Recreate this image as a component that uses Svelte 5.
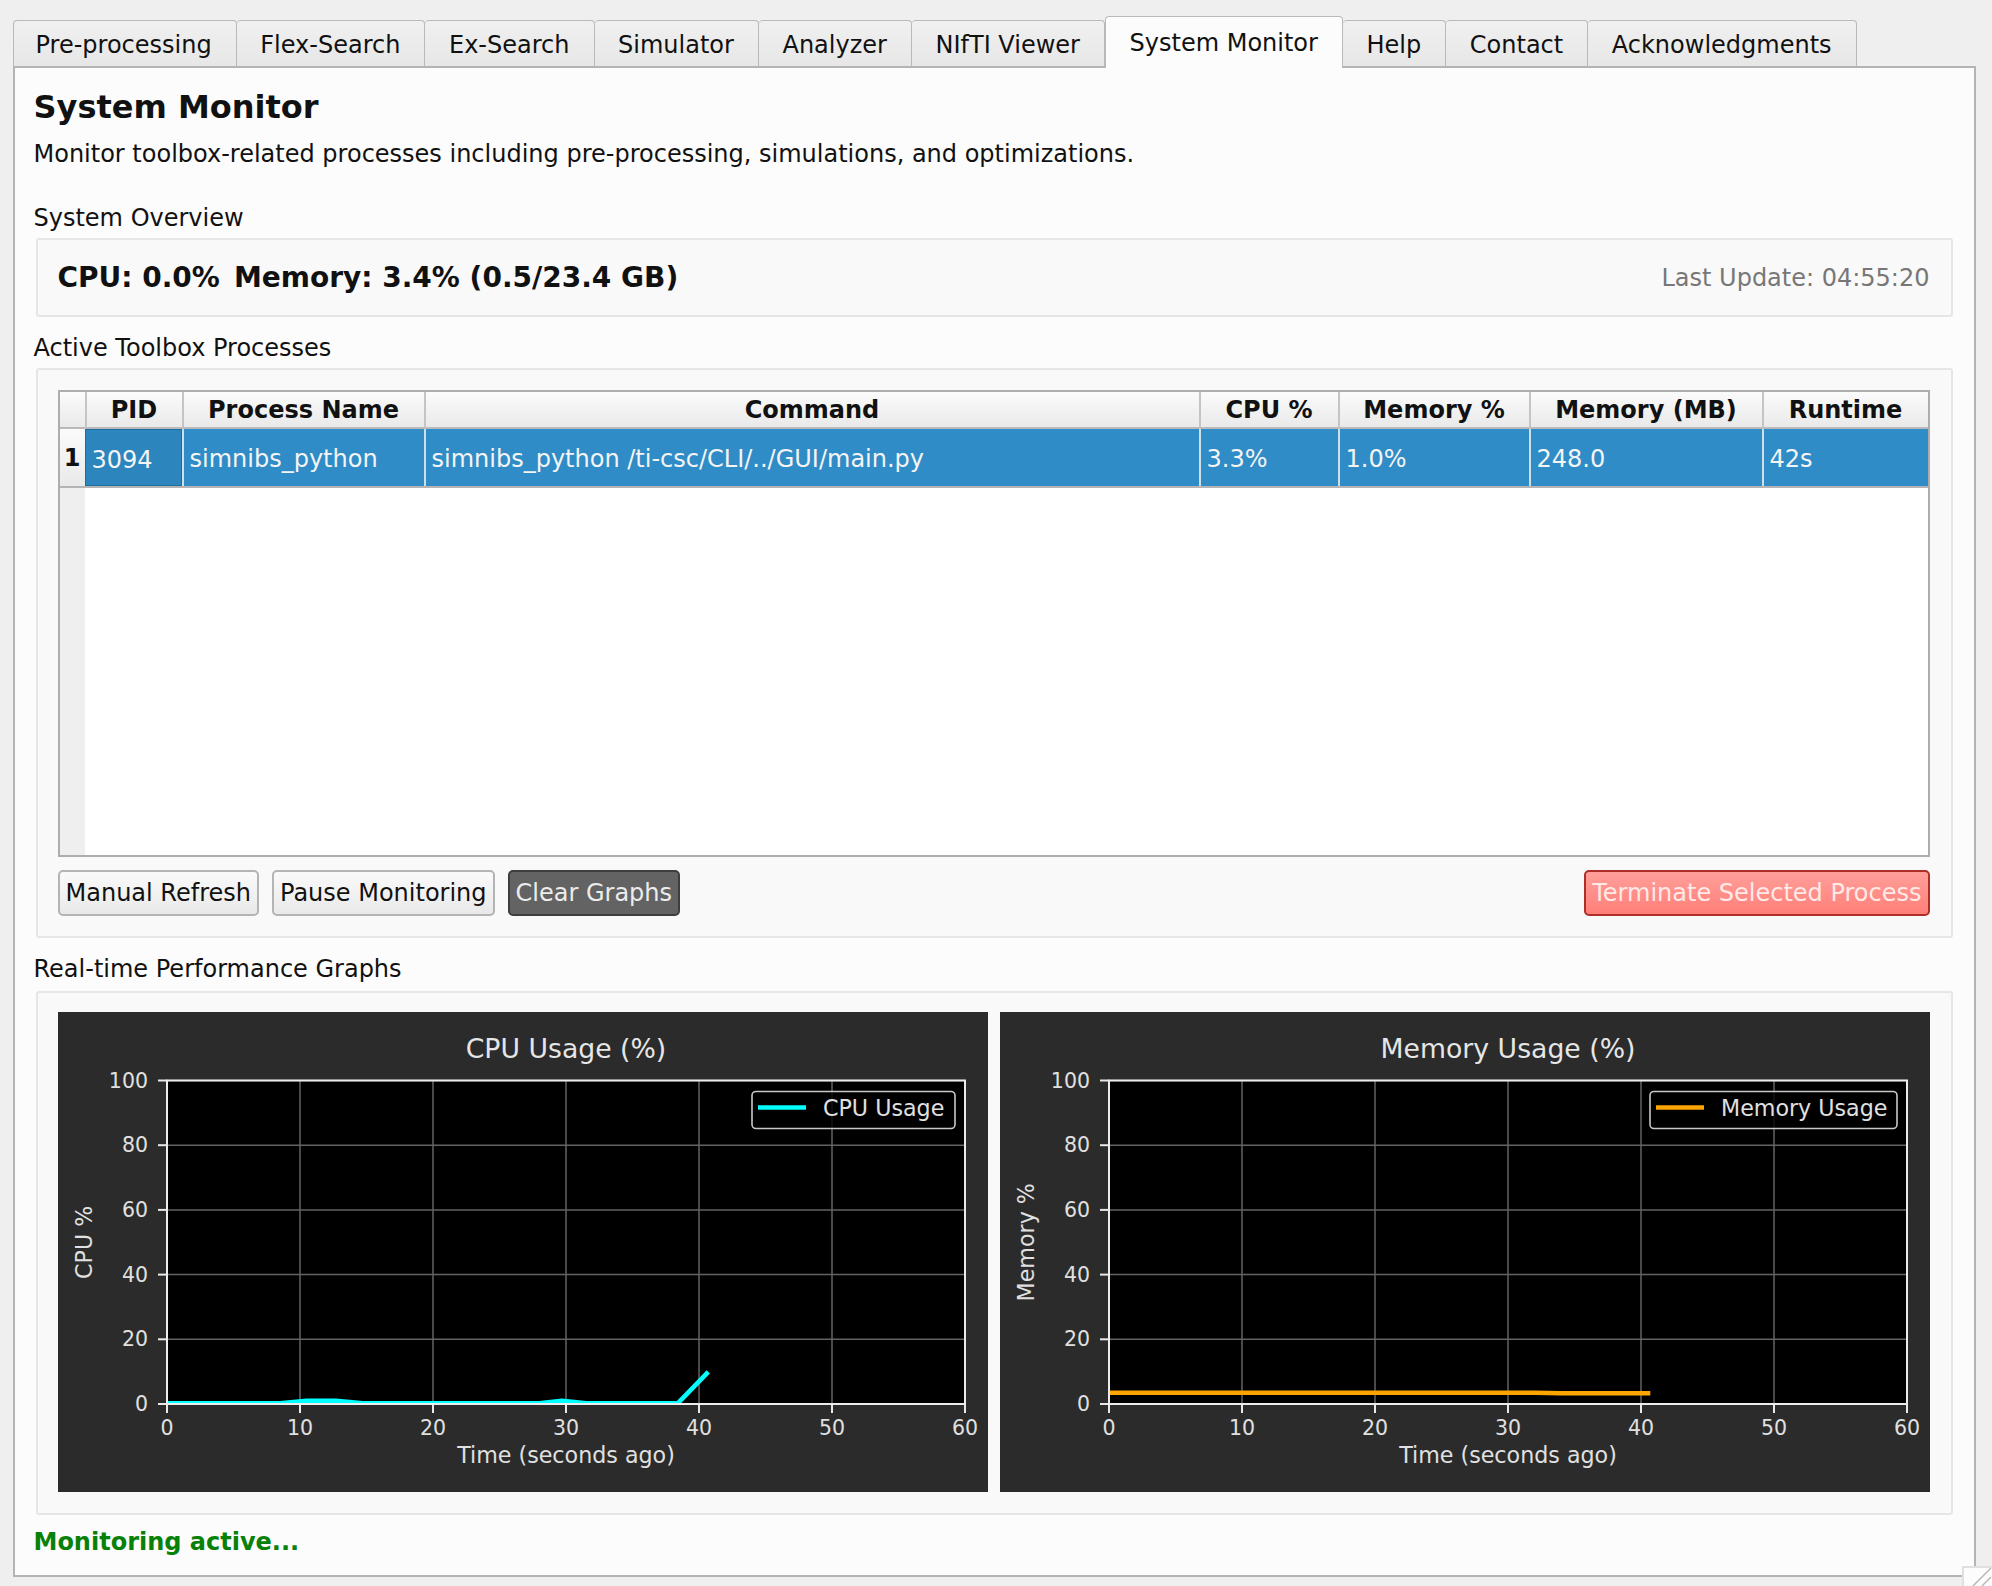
<script>
  const tabs = [
    'Pre-processing', 'Flex-Search', 'Ex-Search', 'Simulator', 'Analyzer',
    'NIfTI Viewer', 'System Monitor', 'Help', 'Contact', 'Acknowledgments'
  ];
  const activeTab = 'System Monitor';

  const columns = [
    { title: 'PID', width: 97 },
    { title: 'Process Name', width: 242 },
    { title: 'Command', width: 775 },
    { title: 'CPU %', width: 139 },
    { title: 'Memory %', width: 191 },
    { title: 'Memory (MB)', width: 233 },
    { title: 'Runtime', width: 166 }
  ];
  const row = ['3094', 'simnibs_python', 'simnibs_python /ti-csc/CLI/../GUI/main.py', '3.3%', '1.0%', '248.0', '42s'];

  // chart geometry, all in screen pixels
  const W = 930, H = 480, LEFT = 109, RIGHT = 907, TOP = 68.5, BOTTOM = 392;
  const xTicks = [0, 10, 20, 30, 40, 50, 60];
  const yTicks = [0, 20, 40, 60, 80, 100];
  const px = (t) => LEFT + (t / 60) * (RIGHT - LEFT);
  const py = (v) => BOTTOM - (v / 100) * (BOTTOM - TOP);
  const toPoints = (data) => data.map(([t, v]) => `${px(t)},${py(v)}`).join(' ');

  const charts = [
    {
      title: 'CPU Usage (%)',
      yLabel: 'CPU %',
      legend: 'CPU Usage',
      color: '#00ffff',
      legendX: 585,
      data: [[0, 0.2], [8.5, 0.2], [10.5, 1], [12.7, 1], [14.7, 0.2], [28, 0.2], [29.7, 1], [31.5, 0.2], [38.4, 0.2], [40.7, 9.9]]
    },
    {
      title: 'Memory Usage (%)',
      yLabel: 'Memory %',
      legend: 'Memory Usage',
      color: '#ffa500',
      legendX: 541,
      data: [[0, 3.5], [32, 3.5], [34, 3.3], [40.7, 3.3]]
    }
  ];
</script>

<div class="window">
  <div class="tabbar">
    {#each tabs as tab}
      <div class="tab" class:active={tab === activeTab}>{tab}</div>
    {/each}
  </div>

  <div class="pane">
    <h1>System Monitor</h1>
    <p class="intro">Monitor toolbox-related processes including pre-processing, simulations, and optimizations.</p>

    <div class="group-title first">System Overview</div>
    <section class="group overview">
      <span class="stat">CPU: 0.0%</span>
      <span class="stat">Memory: 3.4% (0.5/23.4 GB)</span>
      <span class="updated">Last Update: 04:55:20</span>
    </section>

    <div class="group-title">Active Toolbox Processes</div>
    <section class="group processes">
      <div class="table">
        <div class="thead">
          <div class="corner"></div>
          {#each columns as col}
            <div class="th" style:width="{col.width}px">{col.title}</div>
          {/each}
        </div>
        <div class="tr">
          <div class="row-head">1</div>
          {#each row as cell, i}
            <div class="td" class:current={i === 0} style:width="{columns[i].width}px">{cell}</div>
          {/each}
        </div>
        <div class="tbody-empty"><div class="gutter"></div></div>
      </div>

      <div class="actions">
        <button>Manual Refresh</button>
        <button>Pause Monitoring</button>
        <button class="dark">Clear Graphs</button>
        <button class="danger">Terminate Selected Process</button>
      </div>
    </section>

    <div class="group-title graphs-title">Real-time Performance Graphs</div>
    <section class="group graphs">
      {#each charts as chart}
        <svg class="chart" width={W} height={H} viewBox="0 0 {W} {H}">
          <rect width={W} height={H} fill="#2b2b2b" />
          <rect x={LEFT} y={TOP} width={RIGHT - LEFT} height={BOTTOM - TOP} fill="#000" />
          <text class="title" x={(LEFT + RIGHT) / 2} y="46" text-anchor="middle">{chart.title}</text>

          {#each xTicks as t}
            <line class="grid" x1={px(t)} x2={px(t)} y1={TOP} y2={BOTTOM} />
            <line class="tick" x1={px(t)} x2={px(t)} y1={BOTTOM} y2={BOTTOM + 9} />
            <text class="ticklabel" x={px(t)} y={BOTTOM + 31} text-anchor="middle">{t}</text>
          {/each}
          {#each yTicks as v}
            <line class="grid" x1={LEFT} x2={RIGHT} y1={py(v)} y2={py(v)} />
            <line class="tick" x1={LEFT - 9} x2={LEFT} y1={py(v)} y2={py(v)} />
            <text class="ticklabel" x={LEFT - 19} y={py(v) + 7} text-anchor="end">{v}</text>
          {/each}

          <svg x={LEFT} y={TOP} width={RIGHT - LEFT} height={BOTTOM - TOP} viewBox="{LEFT} {TOP} {RIGHT - LEFT} {BOTTOM - TOP}">
            <polyline points={toPoints(chart.data)} fill="none" stroke={chart.color} stroke-width="4.6" stroke-linejoin="round" />
          </svg>

          <rect class="frame" x={LEFT} y={TOP} width={RIGHT - LEFT} height={BOTTOM - TOP} />

          <text class="label" x={(LEFT + RIGHT) / 2} y={BOTTOM + 59} text-anchor="middle">Time (seconds ago)</text>
          <text class="label" transform="translate(34 {(TOP + BOTTOM) / 2}) rotate(-90)" text-anchor="middle">{chart.yLabel}</text>

          <rect class="legend" x={chart.legendX + 109} y={TOP + 11} width={RIGHT - chart.legendX - 119} height="37" rx="4" />
          <line x1={chart.legendX + 115} x2={chart.legendX + 163} y1={TOP + 27} y2={TOP + 27} stroke={chart.color} stroke-width="4.6" />
          <text class="label" x={chart.legendX + 180} y={TOP + 35}>{chart.legend}</text>
        </svg>
      {/each}
    </section>

    <div class="status">Monitoring active...</div>
  </div>
  <div class="grip">
    <svg width="28" height="18" viewBox="0 0 28 18">
      <path d="M9 18 L27 0 M18 18 L27 9" stroke="#b5b5b5" stroke-width="1.4" fill="none" />
    </svg>
  </div>
</div>

<style>
  :global(body) {
    margin: 0;
    background: #efefef;
  }

  .window {
    width: 1992px;
    height: 1586px;
    box-sizing: border-box;
    padding: 16px 16px 0 12.5px;
    position: relative;
    overflow: hidden;
    font-family: "DejaVu Sans", sans-serif;
    font-size: 24px;
    color: #111;
    background: #efefef;
  }

  .tabbar {
    display: flex;
    align-items: flex-end;
    height: 50px;
    position: relative;
    z-index: 1;
  }

  .tab {
    box-sizing: border-box;
    height: 46px;
    padding: 0 24.1px 0 23.5px;
    line-height: 49px;
    white-space: nowrap;
    background: linear-gradient(#f0f0f0, #e7e7e7);
    border: 1.5px solid #b9b9b9;
    border-bottom: none;
    border-left-width: 0;
    border-radius: 4px 4px 0 0;
  }

  .tab:first-child {
    border-left-width: 1.5px;
    padding-left: 22px;
  }

  .tab.active {
    height: 52px;
    line-height: 53px;
    margin-bottom: -2px;
    background: #fcfcfc;
    border-left-width: 1.5px;
  }

  .pane {
    box-sizing: border-box;
    height: 1511px;
    padding: 20px 22px 0 19px;
    background: #fcfcfc;
    border: 2px solid #b4b4b4;
  }

  h1 {
    margin: 0;
    font-size: 32px;
    line-height: 38px;
    font-weight: 700;
  }

  .intro {
    margin: 11px 0 0;
    line-height: 34px;
  }

  .group-title {
    line-height: 32px;
    padding-top: 15px;
    height: 51px;
    box-sizing: border-box;
  }

  .group-title.first {
    margin-top: 30px;
    padding-top: 1px;
    height: 37px;
  }

  .group-title.graphs-title {
    height: 53px;
    padding-top: 15px;
  }

  .group {
    box-sizing: border-box;
    margin-left: 2px;
    width: 1917px;
    background: #f9f9f9;
    border: 2px solid #e6e6e6;
    border-radius: 3px;
  }

  .overview {
    display: flex;
    align-items: center;
    gap: 14px;
    height: 79px;
    padding: 0 21px 0 20px;
  }

  .stat {
    font-size: 28px;
    font-weight: 700;
    white-space: nowrap;
  }

  .updated {
    margin-left: auto;
    color: #777;
  }

  .processes {
    height: 570px;
    padding: 20px 21px 0 20px;
  }

  .table {
    display: flex;
    flex-direction: column;
    height: 467px;
    box-sizing: border-box;
    border: 2px solid #adadad;
    background: #fff;
  }

  .thead {
    display: flex;
    height: 37px;
    flex: none;
  }

  .corner {
    width: 25px;
    flex: none;
    background: linear-gradient(#fbfbfb, #e9e9e9);
    border-bottom: 2px solid #b9b9b9;
  }

  .th {
    box-sizing: border-box;
    flex: none;
    text-align: center;
    font-weight: 700;
    line-height: 36px;
    background: linear-gradient(#fbfbfb, #e9e9e9);
    border-left: 2px solid #c4c4c4;
    border-bottom: 2px solid #b9b9b9;
  }

  .tr {
    display: flex;
    height: 59px;
    flex: none;
    border-bottom: 2px solid #b4b4b4;
    box-sizing: border-box;
  }

  .row-head {
    width: 25px;
    flex: none;
    box-sizing: border-box;
    font-weight: 700;
    line-height: 58px;
    text-align: right;
    padding-right: 4px;
    background: linear-gradient(#fbfbfb, #e9e9e9);
  }

  .td {
    box-sizing: border-box;
    flex: none;
    padding-left: 6px;
    line-height: 60px;
    color: #f4f4f4;
    background: #2f8cc6;
    border-left: 2px solid #cfdfe8;
    white-space: nowrap;
  }

  .td.current {
    background: #2c85bd;
    border: 1.5px solid #1f6d9f;
  }

  .tbody-empty {
    flex: 1;
    display: flex;
  }

  .gutter {
    width: 25px;
    background: #efefef;
  }

  .actions {
    display: flex;
    align-items: center;
    gap: 13px;
    margin-top: 13px;
  }

  button {
    box-sizing: border-box;
    height: 46px;
    padding: 0 6px;
    font: inherit;
    color: #111;
    background: linear-gradient(#fafafa, #e9e9e9);
    border: 2px solid #b4b4b4;
    border-radius: 5px;
    white-space: nowrap;
  }

  button.dark {
    color: #ececec;
    background: #636363;
    border-color: #3e3e3e;
  }

  button.danger {
    margin-left: auto;
    color: #ffe9e7;
    background: linear-gradient(#ff9f9a, #ff7f78);
    border-color: #ad2f28;
  }

  .graphs {
    display: flex;
    gap: 12px;
    height: 524px;
    padding: 19px 20px 0;
  }

  .chart {
    flex: none;
    display: block;
    font-family: "DejaVu Sans", sans-serif;
  }

  .chart .title {
    font-size: 26.7px;
    fill: #e6e6e6;
  }

  .chart .label {
    font-size: 22.2px;
    fill: #e0e0e0;
  }

  .chart .ticklabel {
    font-size: 20.5px;
    fill: #e0e0e0;
  }

  .grid {
    stroke: #636363;
    stroke-width: 1.5;
  }

  .tick {
    stroke: #e8e8e8;
    stroke-width: 2;
  }

  .frame {
    fill: none;
    stroke: #ececec;
    stroke-width: 2;
  }

  .legend {
    fill: #000;
    fill-opacity: 0.8;
    stroke: #c8c8c8;
    stroke-width: 1.6;
  }

  .status {
    margin-top: 11px;
    font-size: 24px;
    line-height: 32px;
    font-weight: 700;
    color: #078107;
  }

  .grip {
    position: absolute;
    right: 0;
    bottom: 0;
    width: 28px;
    height: 18px;
    background: #fcfcfc;
    border: 2px solid #e0e0e0;
    border-width: 2px 0 0 2px;
  }

  .grip svg {
    display: block;
  }
</style>
